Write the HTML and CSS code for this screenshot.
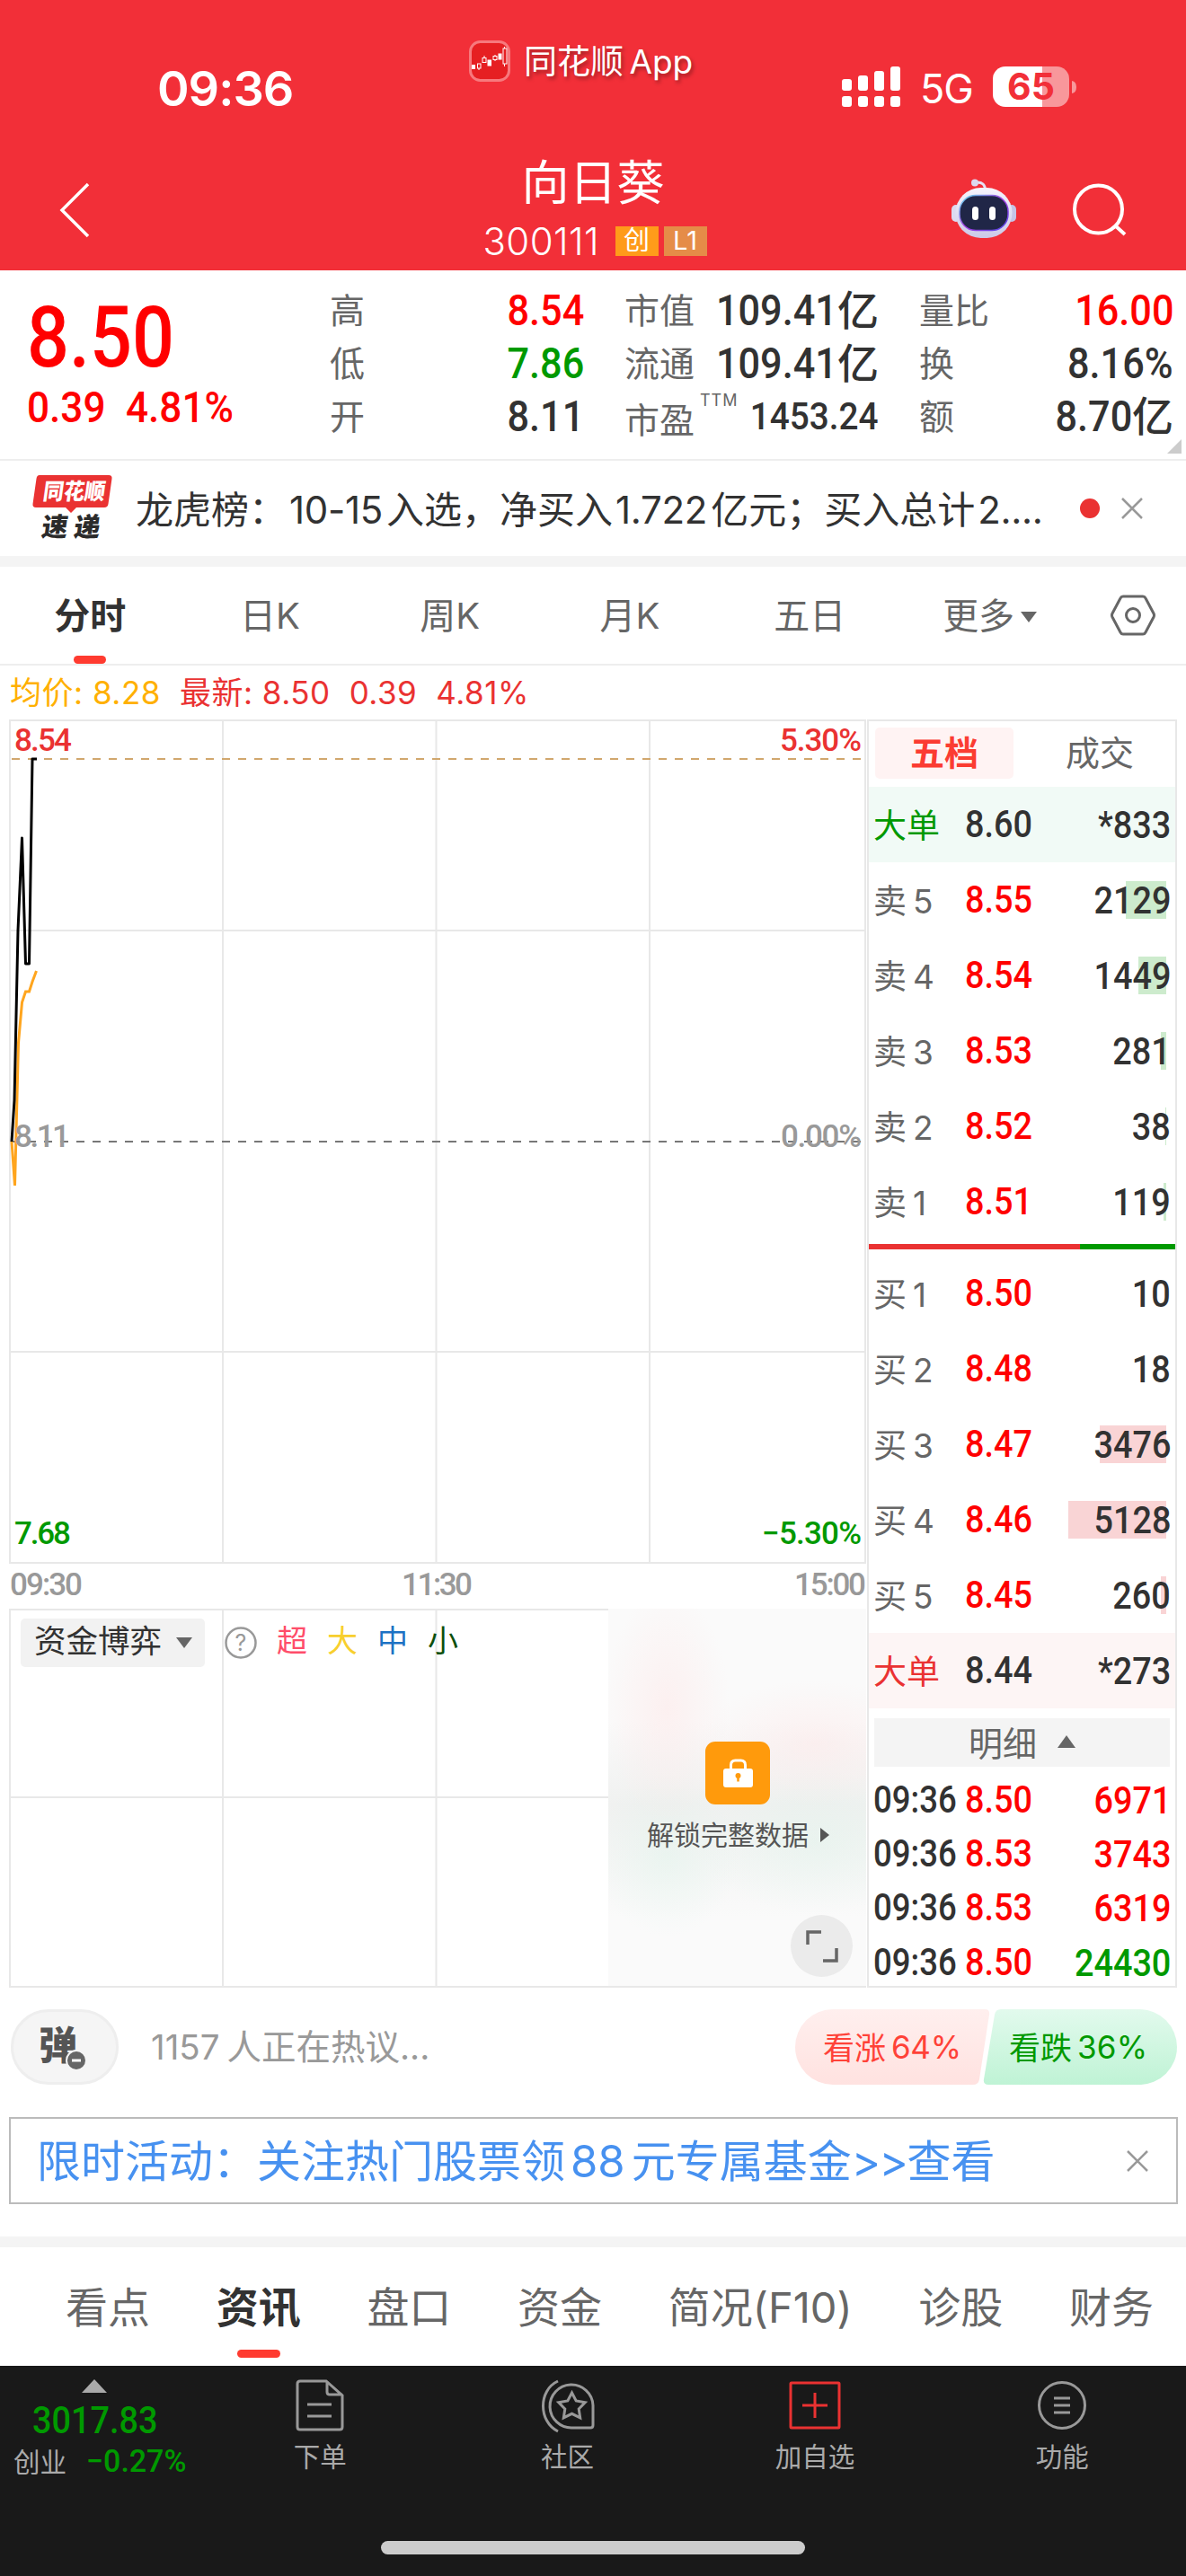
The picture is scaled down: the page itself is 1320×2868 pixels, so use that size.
FILE: index.html
```html
<!DOCTYPE html>
<html lang="zh-CN">
<head>
  <meta charset="UTF-8" />
  <meta name="viewport" content="width=device-width, initial-scale=1.0" />
  <title>向日葵 300111</title>
  <link rel="stylesheet" href="styles.css">
</head>
<body>
  <header class="header">
    <div class="status">
      <div class="clock">09:36</div>
      <div class="from-app">
        <svg width="46" height="46" viewBox="0 0 46 46">
          <rect x="1.5" y="1.5" width="43" height="43" rx="11" fill="#e61f22" stroke="#f7797d" stroke-width="3"/>
          <g fill="#fff"><rect x="3" y="27" width="4" height="5"/><rect x="20.500" y="21.500" width="4.500" height="7"/><rect x="32.500" y="14.500" width="4" height="7"/></g>
          <g fill="none" stroke="#fff" stroke-width="1"><rect x="9.500" y="26" width="3.500" height="5"/><path d="M11 31v2M17 17v2M29 16v1.500M29 21v2M39.500 7v2M39.500 26v3"/><rect x="15" y="19.500" width="4" height="5"/><rect x="27" y="17.500" width="4" height="4"/><rect x="38" y="9" width="4" height="17"/></g>
        </svg>
        <span>同花顺 App</span>
      </div>
      <div class="signals">
        <svg width="65" height="45" viewBox="0 0 65 45" fill="#fff">
          <rect x="0" y="14" width="11" height="13" rx="3"/><rect x="18" y="10" width="11" height="17" rx="3"/><rect x="36" y="5" width="11" height="22" rx="3"/><rect x="54" y="0" width="11" height="27" rx="3"/>
          <rect x="0" y="33" width="11" height="12" rx="3"/><rect x="18" y="33" width="11" height="12" rx="3"/><rect x="36" y="33" width="11" height="12" rx="3"/><rect x="54" y="33" width="11" height="12" rx="3"/>
        </svg>
        <span class="net">5G</span>
        <div class="battery">65</div>
        <svg width="5" height="14" viewBox="0 0 5 14"><path d="M0 0q5 1 5 7t-5 7z" fill="#f8979b"/></svg>
      </div>
    </div>
    <div class="titlebar">
      <svg class="back" width="34" height="62" viewBox="0 0 34 62"><path d="M32 2L3 31l29 29" fill="none" stroke="#fff" stroke-width="3.500"/></svg>
      <div class="stock">
        <div class="stock-name">向日葵</div>
        <div class="stock-code"><span>300111</span><i class="tag">创</i><i class="tag tag-l1">L1</i></div>
      </div>
      <div class="tools">
        <svg width="72" height="67" viewBox="0 0 72 67">
          <defs>
            <linearGradient id="shell" x1="0" y1="0" x2="0" y2="1"><stop offset="0" stop-color="#f6f4fc"/><stop offset="1" stop-color="#cbc9e8"/></linearGradient>
            <linearGradient id="rim" x1="0" y1="0" x2="1" y2="1"><stop offset="0" stop-color="#5fe3ee"/><stop offset=".5" stop-color="#a63be0"/><stop offset="1" stop-color="#5048e8"/></linearGradient>
          </defs>
          <path d="M27 4q11-1 10.500 10" fill="none" stroke="#e6e2f4" stroke-width="3"/>
          <circle cx="26" cy="4.500" r="4" fill="#dcd8ee"/>
          <rect x="0" y="29" width="10" height="19" rx="5" fill="#dcdaf0"/><rect x="62" y="29" width="10" height="19" rx="5" fill="#c5c3e6"/>
          <rect x="4.500" y="10" width="63" height="56" rx="28" fill="url(#shell)"/>
          <rect x="9" y="18.500" width="54" height="39" rx="18" fill="#202647" stroke="url(#rim)" stroke-width="1.500"/>
          <rect x="23" y="31" width="7" height="15" rx="3.500" fill="#fff"/><rect x="42" y="31" width="7" height="15" rx="3.500" fill="#fff"/>
        </svg>
        <svg width="62" height="62" viewBox="0 0 62 62" fill="none" stroke="#fff" stroke-width="4"><circle cx="29.500" cy="30" r="26.500"/><path d="M48 48l11 10"/></svg>
      </div>
    </div>
  </header>

  <section class="quote">
    <div class="price">
      <div class="price-now"><b class="num">8.50</b></div>
      <div class="price-chg"><b class="num">0.39</b><b class="num">4.81%</b></div>
    </div>
    <dl class="facts">
      <div><dt>高</dt><dd class="red"><b class="num">8.54</b></dd></div>
      <div><dt>低</dt><dd class="green"><b class="num">7.86</b></dd></div>
      <div><dt>开</dt><dd><b class="num">8.11</b></dd></div>
    </dl>
    <dl class="facts">
      <div><dt>市值</dt><dd><b class="num">109.41</b>亿</dd></div>
      <div><dt>流通</dt><dd><b class="num">109.41</b>亿</dd></div>
      <div><dt class="low">市盈<sup>TTM</sup></dt><dd class="pe"><b class="num">1453.24</b></dd></div>
    </dl>
    <dl class="facts">
      <div><dt>量比</dt><dd class="red"><b class="num">16.00</b></dd></div>
      <div><dt>换</dt><dd><b class="num">8.16%</b></dd></div>
      <div><dt>额</dt><dd><b class="num">8.70</b>亿</dd></div>
    </dl>
    <span class="corner"></span>
  </section>

  <section class="news">
    <svg width="90" height="92" viewBox="0 -8 90 92">
      <path d="M8 1h77q4 0 3.500 4l-4 28q-.5 4-4.500 4H49l-6 6-6-6H4q-4 0-3.500-4l4-28q.5-4 3.500-4z" fill="#ea3232"/>
      <g class="logo-text" transform="skewX(-8)">
        <text x="15" y="28" font-size="25" textLength="69" lengthAdjust="spacingAndGlyphs" fill="#fff">同花顺</text>
        <text x="19" y="69" font-size="29" textLength="65" fill="#2b2b2b">速递</text>
      </g>
    </svg>
    <p>龙虎榜：<i>10-15</i>入选，净买入<i>1.722</i>亿元；买入总计<i>2....</i></p>
    <span class="dot"></span>
    <svg width="24" height="24" viewBox="0 0 24 24"><path d="M1 1l22 22M23 1L1 23" stroke="#999" stroke-width="2.500"/></svg>
  </section>

  <nav class="periods">
    <a class="on">分时</a><a>日K</a><a>周K</a><a>月K</a><a>五日</a><a>更多<i class="caret"></i></a>
    <svg width="52" height="46" viewBox="0 0 52 46" fill="none" stroke="#666" stroke-width="3"><path d="M15 2h22q2 0 3 2l9 17q1 2 0 4l-9 17q-1 2-3 2H15q-2 0-3-2L3 25q-1-2 0-4l9-17q1-2 3-2z"/><circle cx="26" cy="23" r="7.500"/></svg>
  </nav>

  <div class="legend">
    <span class="avg">均价: 8.28</span><span>最新: 8.50</span><span>0.39</span><span>4.81%</span>
  </div>

  <main class="market">
    <div class="charts">
      <svg class="chart" width="954" height="940" viewBox="0 0 954 940">
        <g stroke="#e8e8e8" stroke-width="2" fill="none">
          <rect x="1" y="1" width="952" height="938"/>
          <path d="M238 0v940M475.500 0v940M713 0v940M0 235h954M0 704h954"/>
        </g>
        <path d="M3 44h951" stroke="#d1a76d" stroke-width="2" stroke-dasharray="9 9"/>
        <path d="M3 470h951" stroke="#777" stroke-width="2" stroke-dasharray="9 9"/>
        <polyline points="3,470 6.500,519 10.500,360 14.500,315 18.500,303 22.500,303 26,292 30.500,280" fill="none" stroke="#ffa51e" stroke-width="3"/>
        <polyline points="3,470 6,424 10,235 14.500,132 18.500,272 22.500,272 26,44 31,44" fill="none" stroke="#000" stroke-width="3" stroke-linejoin="round"/>
        <g class="axis">
          <text x="6" y="35" textLength="64" fill="#ea3232">8.54</text>
          <text x="858" y="35" textLength="91" fill="#ea3232">5.30%</text>
          <text x="6" y="476" textLength="62" fill="#999">8.11</text>
          <text x="859" y="476" textLength="90" fill="#999">0.00%</text>
          <text x="6" y="918" textLength="63" fill="#090">7.68</text>
          <text x="838" y="918" textLength="111" fill="#090">−5.30%</text>
        </g>
      </svg>
      <svg class="axis" width="954" height="50" viewBox="0 0 954 50" fill="#999">
        <text x="1" y="35" textLength="81">09:30</text>
        <text x="437" y="35" textLength="79">11:30</text>
        <text x="874" y="35" textLength="80">15:00</text>
      </svg>
      <div class="flow">
        <svg class="grid" width="954" height="422" viewBox="0 0 954 422" stroke="#e8e8e8" stroke-width="2" fill="none">
          <rect x="1" y="1" width="952" height="420"/><path d="M238 0v422M475.500 0v422M713 0v422M0 210h954"/>
        </svg>
        <div class="flow-bar">
          <span class="chip">资金博弈<i class="caret"></i></span>
          <svg width="36" height="36" viewBox="0 0 36 36"><circle cx="18" cy="18" r="16.500" fill="none" stroke="#999" stroke-width="2.500"/><text x="18" y="27" text-anchor="middle" class="help">?</text></svg>
          <span class="xl">超</span><span class="lg">大</span><span class="md">中</span><span class="sm">小</span>
        </div>
        <div class="locked">
          <svg width="72" height="70" viewBox="0 0 72 70">
            <rect width="72" height="70" rx="11" fill="#ff9a0c"/>
            <path d="M28.500 31v-5q0-5 5-5h6q5 0 5 5v5" fill="none" stroke="#fff" stroke-width="3"/>
            <rect x="20" y="30" width="33" height="21" rx="3" fill="#fff"/>
            <circle cx="36.500" cy="38" r="3" fill="#ff9a0c"/><path d="M36.500 38v6.500" stroke="#ff9a0c" stroke-width="2.500"/>
          </svg>
          <div class="unlock">解锁完整数据<i></i></div>
          <div class="expand"><svg width="36" height="36" viewBox="0 0 36 36" fill="none" stroke="#666" stroke-width="3.500"><path d="M2 16V2h15M34 20v14H19"/></svg></div>
        </div>
      </div>
    </div>

    <aside class="book">
      <div class="book-tabs"><span class="on">五档</span><span>成交</span></div>
      <div class="row big sell"><span>大单</span><b class="num">8.60</b><em><b class="num">*833</b></em></div>
      <div class="row sell"><span>卖<i>5</i></span><b class="num">8.55</b><em><u style="width:45px"></u><b class="num">2129</b></em></div>
      <div class="row sell"><span>卖<i>4</i></span><b class="num">8.54</b><em><u style="width:31px"></u><b class="num">1449</b></em></div>
      <div class="row sell"><span>卖<i>3</i></span><b class="num">8.53</b><em><u style="width:6px"></u><b class="num">281</b></em></div>
      <div class="row sell"><span>卖<i>2</i></span><b class="num">8.52</b><em><u style="width:1px"></u><b class="num">38</b></em></div>
      <div class="row sell"><span>卖<i>1</i></span><b class="num">8.51</b><em><u style="width:3px"></u><b class="num">119</b></em></div>
      <div class="ratio"><i style="width:69%"></i></div>
      <div class="row buy"><span>买<i>1</i></span><b class="num">8.50</b><em><b class="num">10</b></em></div>
      <div class="row buy"><span>买<i>2</i></span><b class="num">8.48</b><em><b class="num">18</b></em></div>
      <div class="row buy"><span>买<i>3</i></span><b class="num">8.47</b><em><u style="width:74px"></u><b class="num">3476</b></em></div>
      <div class="row buy"><span>买<i>4</i></span><b class="num">8.46</b><em><u style="width:109px"></u><b class="num">5128</b></em></div>
      <div class="row buy"><span>买<i>5</i></span><b class="num">8.45</b><em><u style="width:6px"></u><b class="num">260</b></em></div>
      <div class="row big buy"><span>大单</span><b class="num">8.44</b><em><b class="num">*273</b></em></div>
      <div class="detail">明细<i></i></div>
      <div class="row tick"><span><b class="num">09:36</b></span><b class="num">8.50</b><em class="red"><b class="num">6971</b></em></div>
      <div class="row tick"><span><b class="num">09:36</b></span><b class="num">8.53</b><em class="red"><b class="num">3743</b></em></div>
      <div class="row tick"><span><b class="num">09:36</b></span><b class="num">8.53</b><em class="red"><b class="num">6319</b></em></div>
      <div class="row tick"><span><b class="num">09:36</b></span><b class="num">8.50</b><em class="green"><b class="num">24430</b></em></div>
    </aside>
  </main>

  <section class="talk">
    <div class="danmu">弹<svg width="24" height="24" viewBox="0 0 24 24"><circle cx="12" cy="12" r="11" fill="#666" stroke="#f5f5f5" stroke-width="2"/><path d="M7 12h10" stroke="#fff" stroke-width="3"/></svg></div>
    <p><i>1157</i>人正在热议...</p>
    <svg class="vote" width="425" height="84" viewBox="0 0 425 84">
      <defs>
        <linearGradient id="up" x1="0" y1="0" x2="0" y2="1"><stop offset="0" stop-color="#ffefee"/><stop offset="1" stop-color="#ffe2e0"/></linearGradient>
        <linearGradient id="down" x1="0" y1="0" x2="0" y2="1"><stop offset="0" stop-color="#e2faed"/><stop offset="1" stop-color="#bff3d5"/></linearGradient>
      </defs>
      <path d="M42 0h169q6 0 5 6l-11 72q-1 6-7 6H42a42 42 0 0 1 0-84z" fill="url(#up)"/>
      <path d="M229 0h154a42 42 0 0 1 0 84H215q-6 0-5-6l12-72q1-6 7-6z" fill="url(#down)"/>
      <text x="31" y="56" fill="#ff4238">看涨</text><text x="107" y="55" textLength="78" fill="#ff4238">64%</text>
      <text x="238" y="56" fill="#090">看跌</text><text x="314" y="55" textLength="78" fill="#090">36%</text>
    </svg>
  </section>

  <section class="promo">
    <p>限时活动：关注热门股票领<i>88</i>元专属基金<i class="gt">&gt;&gt;</i>查看</p>
    <svg width="24" height="24" viewBox="0 0 24 24"><path d="M1 1l22 22M23 1L1 23" stroke="#999" stroke-width="2.500"/></svg>
  </section>

  <nav class="sections">
    <a>看点</a><a class="on">资讯</a><a>盘口</a><a>资金</a><a>简况(F10)</a><a>诊股</a><a>财务</a>
  </nav>

  <footer class="dock">
    <div class="dock-items">
      <div class="index">
        <i></i>
        <div><b class="num">3017.83</b></div>
        <p>创业<b class="num">−0.27%</b></p>
      </div>
      <div class="item">
        <svg width="54" height="60" viewBox="0 0 54 60" fill="none" stroke="#999" stroke-width="3"><path d="M34 2H5q-3 0-3 3v48q0 3 3 3h44q3 0 3-3V18zM35 2v12q0 3 3 3h14M13 28h27M13 41h27"/></svg>
        <span>下单</span>
      </div>
      <div class="item">
        <svg width="60" height="60" viewBox="0 0 60 60" fill="none" stroke="#999" stroke-width="3"><path d="M19 2C-3 12-3 47 19 58"/><path d="M58 29A24 24 0 1 0 35 54h20q3 0 3-3z"/><path d="M34.500 15l4.700 9 10 1.700-7 7.200 1.500 10-9.200-4.600-9.200 4.600 1.500-10-7-7.200 10-1.700z"/></svg>
        <span>社区</span>
      </div>
      <div class="item">
        <svg width="58" height="60" viewBox="0 0 58 60" fill="none" stroke="#ea3232" stroke-width="3"><rect x="2" y="4" width="54" height="50" rx="1"/><path d="M29 15v28M15 29h28"/></svg>
        <span>加自选</span>
      </div>
      <div class="item">
        <svg width="56" height="60" viewBox="0 0 56 60" fill="none" stroke="#999" stroke-width="3"><circle cx="28" cy="29" r="25.500"/><path d="M19 21h18M19 29h18M19 37h18"/></svg>
        <span>功能</span>
      </div>
    </div>
    <div class="home"></div>
  </footer>
</body>
</html>
```

FILE: styles.css
```css
* { box-sizing: border-box; }
body { margin: 0; width: 1320px; height: 2868px; overflow: hidden; background: #fff; color: #323232; font-family: Inter, "Noto Sans CJK SC", sans-serif; }
p, dl, dt, dd { margin: 0; }
i, em { font-style: normal; }
u { text-decoration: none; }
svg { display: block; flex: none; }
.red { color: #f00; }
.green { color: #090; }

/* condensed figures */
.num { display: inline-block; font-family: Roboto, sans-serif; font-weight: 500; transform: scaleX(.9); transform-origin: right center; }

/* header */
.header { height: 301px; background: #f22f38; color: #fff; }
.status { height: 150px; display: grid; grid-template-columns: 522px 1fr 383px; }
.clock { padding: 65px 0 0 175px; font-size: 54px; line-height: 68px; font-weight: 600; letter-spacing: -1px; }
.from-app { display: flex; gap: 15px; padding-top: 45px; font-size: 37px; line-height: 47px; white-space: nowrap; word-spacing: -4px; text-shadow: 2px 3px 4px rgba(0,0,0,.35); }
.signals { display: flex; align-items: center; height: 45px; margin-top: 74px; }
.net { width: 103px; padding-left: 22px; font-size: 45px; letter-spacing: -1px; line-height: 45px; padding-top: 4px; }
.battery { width: 85px; height: 45px; margin-right: 3px; border-radius: 14px; background: linear-gradient(90deg, #fff 55px, #f8979b 55px); color: #f22f38; font-size: 41px; line-height: 45px; font-weight: 700; text-align: center; }
.titlebar { height: 151px; display: grid; grid-template-columns: 330px 660px 330px; }
.back { margin: 53px 0 0 66px; }
.stock { text-align: center; padding-top: 22px; }
.stock-name { font-size: 53px; line-height: 64px; }
.stock-code { display: flex; justify-content: center; align-items: center; height: 34px; margin-top: 15px; padding-left: 4px; font-size: 42px; font-weight: 300; }
.stock-code span { width: 141px; letter-spacing: .4px; text-align: left; }
.tag { width: 48px; height: 33px; margin-left: 6px; background: #ff9b1a; font-size: 29px; line-height: 32px; font-weight: 400; }
.tag-l1 { background: #e58c48; }
.tools { display: flex; align-items: flex-start; gap: 62px; padding: 49px 0 0 69px; }
.tools svg + svg { margin-top: 4px; }

/* quote */
.quote { position: relative; display: flex; gap: 45px; height: 212px; padding: 15px 0 0 32px; border-bottom: 2px solid #eee; }
.price { width: 290px; color: #f00; }
.price .num { transform-origin: left center; margin-left: -2px; }
.price-now { height: 107px; padding-top: 9px; font-size: 95px; line-height: 98px; }
.price-now .num { transform: scaleX(.87); }
.price-chg { display: flex; gap: 15px; padding-top: 5px; font-size: 49px; line-height: 52px; }
.facts { width: 283px; }
.facts div { display: flex; justify-content: space-between; height: 59px; line-height: 59px; }
.facts dt { position: relative; color: #666; font-size: 39px; white-space: nowrap; }
.facts dt.low { padding-top: 4px; }
.facts sup { position: absolute; left: 84px; top: -8px; font-size: 18px; line-height: 40px; letter-spacing: 1px; }
.facts dd { font-size: 46px; font-weight: 500; white-space: nowrap; display: flex; }
.facts .num { font-size: 48px; }
.facts .pe .num { font-size: 43px; }
.corner { position: absolute; right: 5px; bottom: 6px; border: 8px solid; border-color: transparent #ccc #ccc transparent; }

/* news */
.news { display: flex; align-items: center; height: 118px; padding: 0 48px 12px 36px; background: linear-gradient(#fff 106px, #f4f4f4 106px); }
.news p { flex: 1; margin: -4px 0 0 25px; font-size: 42px; white-space: nowrap; }
.news p i { margin: 0 4px 0 3px; letter-spacing: -.3px; }
.logo-text { font-weight: 900; font-family: "Noto Sans CJK SC", sans-serif; }
.dot { width: 22px; height: 22px; margin-right: 24px; border-radius: 50%; background: #ea3232; }

/* period tabs */
.periods { display: flex; align-items: center; height: 110px; border-bottom: 2px solid #eee; color: #666; font-size: 40px; }
.periods a { position: relative; width: 200.3px; height: 108px; line-height: 110px; text-align: center; }
.periods svg { margin-left: 33px; }
.on { font-weight: 600; color: #323232; }
.periods .on::after, .sections .on::after { content: ""; position: absolute; left: 50%; bottom: 0; width: 36px; height: 9px; margin-left: -18px; border-radius: 5px; background: #ff3b30; }
.caret { display: inline-block; border: 9px solid transparent; border-top: 12px solid #666; border-bottom: 0; margin-left: 7px; vertical-align: 7px; }

.legend { display: flex; gap: 21px; height: 60px; padding-left: 11px; color: #ea3232; font-size: 35px; line-height: 60px; letter-spacing: .5px; }
.avg { color: #ffb000; }

/* charts */
.market { display: flex; gap: 1px; height: 1412px; padding-left: 10px; }
.charts { width: 954px; }
.axis { font-family: Roboto, sans-serif; font-size: 35px; font-weight: 500; }
.flow { position: relative; display: flex; justify-content: space-between; height: 422px; }
.grid { position: absolute; left: 0; top: 0; }
.flow-bar { position: relative; display: flex; align-items: center; height: 55px; margin: 10px 0 0 13px; font-size: 34px; line-height: 51px; }
.flow-bar > span:not(.chip) { height: 56px; }
.chip { display: flex; align-items: center; width: 205px; height: 54px; margin-right: 22px; padding: 0 0 3px 15px; border-radius: 5px; background: #f2f2f2; font-size: 35.5px; }
.chip .caret { margin: 3px 0 0 16px; }
.help { font-size: 25px; fill: #999; }
.flow-bar > span + span, .xl { margin-left: 22px; }
.xl { color: #ff4d6a; }
.lg { color: #f8cf2e; }
.md { color: #1c72c4; }
.sm { color: #0d4f0d; }
.locked { position: relative; width: 287px; height: 420px; padding: 148px 0 0 43px; background: radial-gradient(ellipse 70px 130px at 65px 110px, rgba(255,225,225,.4), transparent), radial-gradient(ellipse 130px 70px at 230px 150px, rgba(255,225,225,.4), transparent), radial-gradient(ellipse 80px 90px at 65px 275px, rgba(215,242,230,.35), transparent), radial-gradient(ellipse 130px 80px at 230px 260px, rgba(215,242,230,.35), transparent), linear-gradient(#fafafa 30%, #f0f1f0 52%, #fafafa 82%); }
.locked > svg { margin-left: 65px; }
.unlock { display: flex; align-items: center; gap: 13px; margin-top: 13px; color: #555; font-size: 30px; line-height: 42px; white-space: nowrap; }
.unlock i { border: 8px solid transparent; border-left: 10px solid #555; border-right: 0; }
.expand { position: absolute; right: 15px; bottom: 10px; width: 69px; height: 69px; display: flex; align-items: center; justify-content: center; border-radius: 50%; background: #ebebeb; }

/* order book */
.book { width: 345px; height: 1412px; border: 2px solid #e8e8e8; }
.book-tabs { display: flex; gap: 19px; height: 73px; padding: 7px 7px 0; }
.book-tabs span { width: 155px; height: 57px; border-radius: 5px; color: #666; font-size: 38px; line-height: 57px; text-align: center; }
.book-tabs .on { background: #fff3f3; color: #fb3c32; }
.row { display: flex; align-items: center; height: 84px; padding: 0 5px 2px; color: #f00; font-size: 42px; }
.row > span { width: 102px; color: #666; font-size: 37px; white-space: nowrap; }
.row span i { margin-left: 7px; }
.row > .num { transform-origin: left center; }
.row em { position: relative; flex: 1; color: #323232; text-align: right; }
.row em .num { position: relative; }
.row u { position: absolute; right: 5px; top: 5px; height: 42px; }
.sell u { background: #cdebcd; }
.buy u { background: #f9d4d5; }
.big { color: #323232; }
.big.sell { background: #f1faf6; }
.big.buy { background: #fdf5f5; }
.big.sell span { color: #090; }
.big.buy span { color: #ea3232; }
.ratio { height: 6px; margin: 5px 0 7px; background: #090; }
.ratio i { display: block; height: 6px; background: #ea3232; }
.detail { display: flex; align-items: center; justify-content: center; gap: 23px; height: 54px; margin: 11px 6px 7px; padding-bottom: 3px; background: #f4f4f4; color: #666; font-size: 38px; }
.detail i { border: 10px solid transparent; border-bottom: 14px solid #666; border-top: 0; }
.tick { height: 60.3px; }
.tick span .num { color: #323232; font-size: 42px; transform: scaleX(.87); transform-origin: left center; }
.row.tick em.red { color: #f00; }
.row.tick em.green { color: #090; }

/* discussion */
.talk { display: flex; height: 144px; padding: 24px 10px 0 12px; }
.danmu { position: relative; width: 120px; height: 84px; padding-left: 28px; border: 3px solid #eee; border-radius: 42px; background: #f5f5f5; color: #555; font-size: 43px; font-weight: 900; line-height: 74px; }
.danmu svg { position: absolute; left: 58px; top: 42px; }
.talk p { flex: 1; padding-left: 36px; color: #999; font-size: 38.5px; line-height: 85px; }
.talk p i { margin-right: 8px; }
.vote { font-size: 35px; }

/* promo */
.promo { display: flex; align-items: center; justify-content: space-between; height: 97px; margin: 0 9px 36px 10px; padding: 0 31px 0 29px; border: 2px solid #bbb; }
.promo p { margin-top: -7px; color: #4791f0; font-size: 49px; white-space: nowrap; }
.promo i { margin: 0 7px 0 6px; }
.promo .gt { margin: 0; letter-spacing: -1.5px; }

/* section tabs */
.sections { display: flex; justify-content: space-between; height: 144px; padding: 0 36px 0 73px; border-top: 12px solid #f4f4f4; color: #666; font-size: 47px; }
.sections a { position: relative; line-height: 133px; white-space: nowrap; }
.sections .on::after { bottom: 9px; width: 48px; margin-left: -24px; }

/* bottom dock */
.dock { height: 234px; background: #191919; color: #aaa; }
.dock-items { display: flex; height: 195px; padding-top: 15px; font-size: 29.5px; }
.index { width: 219px; color: #090; }
.index > i { display: block; width: 0; margin-left: 91px; border: 14px solid transparent; border-top: 0; border-bottom: 15px solid #aaa; }
.index .num { transform-origin: left center; }
.index div { padding-left: 36px; font-size: 43px; line-height: 58px; }
.index div .num { transform: scaleX(.88); }
.index p { color: #aaa; padding-left: 15px; line-height: 36px; white-space: nowrap; }
.index p .num { margin-left: 22px; color: #090; font-size: 35px; transform: scaleX(.97); }
.item { width: 276px; display: flex; flex-direction: column; align-items: center; }
.item span { line-height: 48px; margin-top: 2px; }
.home { width: 472px; height: 15px; margin: 0 auto; border-radius: 8px; background: #ccc; }
```
